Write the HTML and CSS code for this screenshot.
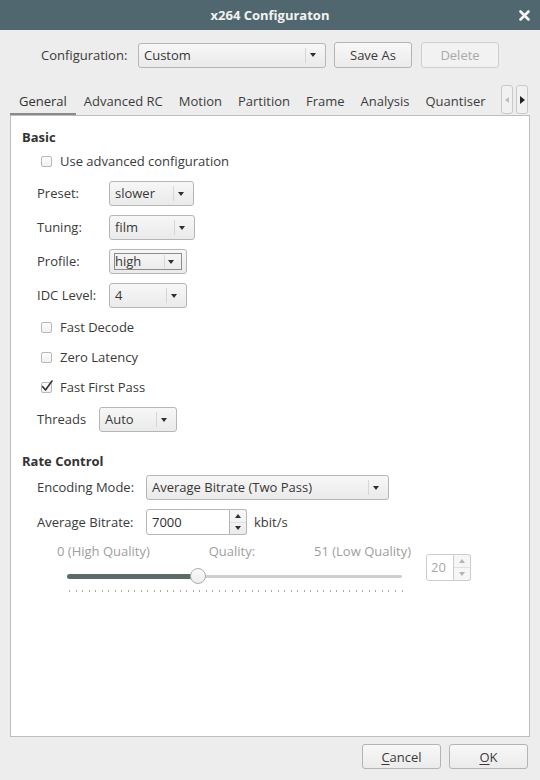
FILE: index.html
```html
<!DOCTYPE html>
<html>
<head>
<meta charset="utf-8">
<link rel="stylesheet" href="styles.css">
</head>
<body>
<div class="window">
  <div class="titlebar">
    <span class="title">x264 Configuraton</span>
    <span class="close"><svg width="11" height="11" viewBox="0 0 11 11"><path d="M1.5 1.5 L9.5 9.5 M9.5 1.5 L1.5 9.5" stroke="#f4f4f4" stroke-width="2.6" stroke-linecap="round"/></svg></span>
  </div>

  <div class="config-row">
    <span class="config-label">Configuration:</span>
    <div class="combo combo-config"><span class="combo-text">Custom</span><span class="combo-btn"><i class="arrow"></i></span></div>
    <span class="btn btn-save">Save As</span>
    <span class="btn btn-delete disabled">Delete</span>
  </div>

  <div class="tabbar">
    <div class="tabs">
      <span class="tab active">General</span>
      <span class="tab">Advanced RC</span>
      <span class="tab">Motion</span>
      <span class="tab">Partition</span>
      <span class="tab">Frame</span>
      <span class="tab">Analysis</span>
      <span class="tab">Quantiser</span>
    </div>
    <div class="tab-scroll">
      <span class="scroll-btn"><i class="tri-left"></i></span>
      <span class="scroll-btn"><i class="tri-right"></i></span>
    </div>
  </div>

  <div class="panel">
    <div class="panel-body">
      <div class="section">
        <div class="section-title basic-title">Basic</div>
        <div class="check-row"><span class="checkbox"></span><span>Use advanced configuration</span></div>
        <div class="form-row">
          <span class="form-label">Preset:</span>
          <div class="combo w-preset"><span class="combo-text">slower</span><span class="combo-btn"><i class="arrow"></i></span></div>
        </div>
        <div class="form-row">
          <span class="form-label">Tuning:</span>
          <div class="combo w-tuning"><span class="combo-text">film</span><span class="combo-btn"><i class="arrow"></i></span></div>
        </div>
        <div class="form-row">
          <span class="form-label">Profile:</span>
          <div class="combo w-profile focused"><span class="focus-ring"><span class="combo-text">high</span><span class="combo-btn"><i class="arrow"></i></span></span></div>
        </div>
        <div class="form-row">
          <span class="form-label">IDC Level:</span>
          <div class="combo w-profile"><span class="combo-text">4</span><span class="combo-btn"><i class="arrow"></i></span></div>
        </div>
        <div class="check-row"><span class="checkbox"></span><span>Fast Decode</span></div>
        <div class="check-row"><span class="checkbox"></span><span>Zero Latency</span></div>
        <div class="check-row"><span class="checkbox checked"><svg width="14" height="14" viewBox="0 0 14 14"><path d="M2.5 7.5 L5.5 11 L12 2" fill="none" stroke="#333" stroke-width="1.6" stroke-linecap="round" stroke-linejoin="round"/></svg></span><span>Fast First Pass</span></div>
        <div class="form-row">
          <span class="form-label threads-label">Threads</span>
          <div class="combo w-threads"><span class="combo-text">Auto</span><span class="combo-btn"><i class="arrow"></i></span></div>
        </div>
      </div>

      <div class="section">
        <div class="section-title rc-title">Rate Control</div>
        <div class="form-row">
          <span class="form-label wide-label">Encoding Mode:</span>
          <div class="combo w-mode"><span class="combo-text">Average Bitrate (Two Pass)</span><span class="combo-btn"><i class="arrow"></i></span></div>
        </div>
        <div class="form-row row-spin">
          <span class="form-label wide-label">Average Bitrate:</span>
          <div class="spin">
            <span class="spin-entry">7000</span>
            <span class="spin-btns"><span class="spin-half"><i class="up"></i></span><span class="spin-half"><i class="down"></i></span></span>
          </div>
          <span class="unit">kbit/s</span>
        </div>
        <div class="quality">
          <div class="quality-main">
            <div class="quality-labels"><span>0 (High Quality)</span><span>Quality:</span><span>51 (Low Quality)</span></div>
            <div class="slider">
              <span class="track"></span>
              <span class="fill" style="width:39.2%"></span>
              <span class="handle" style="left:39.2%"></span>
            </div>
            <div class="ticks"></div>
          </div>
          <div class="spin spin-disabled">
            <span class="spin-entry">20</span>
            <span class="spin-btns"><span class="spin-half"><i class="up"></i></span><span class="spin-half"><i class="down"></i></span></span>
          </div>
        </div>
      </div>
    </div>
  </div>

  <div class="footer">
    <span class="btn btn-footer"><u>C</u>ancel</span>
    <span class="btn btn-footer"><u>O</u>K</span>
  </div>
</div>
</body>
</html>
```
FILE: styles.css
```css
* { box-sizing: border-box; }

body {
  margin: 0;
  width: 540px;
  height: 780px;
  background: #ededed;
  font-family: "Open Sans", "Noto Sans", "DejaVu Sans", sans-serif;
  font-size: 13px;
  color: #3a3a3a;
  overflow: hidden;
}

.window {
  display: flex;
  flex-direction: column;
  height: 780px;
}

/* title bar */
.titlebar {
  height: 30px;
  background: #51676f;
  display: grid;
  grid-template-columns: 1fr auto 1fr;
  align-items: center;
}
.title {
  grid-column: 2;
  font-weight: bold;
  font-size: 13px;
  color: #f1f3f3;
}
.close {
  grid-column: 3;
  justify-self: end;
  margin-right: 10px;
  display: flex;
}

/* configuration row */
.config-row {
  display: flex;
  align-items: center;
  height: 26px;
  margin-top: 12px;
  padding-left: 41px;
}
.config-label { width: 97px; }
.combo-config { width: 188px; height: 26px; }
.btn-save { margin-left: 8px; }
.btn-delete { margin-left: 9px; }

.btn {
  width: 78px;
  height: 26px;
  display: flex;
  align-items: center;
  justify-content: center;
  border: 1px solid #b4b4b4;
  border-radius: 3px;
  background: linear-gradient(#f8f8f8, #ebebeb);
  color: #3a3a3a;
}
.btn u { text-decoration-thickness: 1px; text-underline-offset: 2px; }
.btn.disabled {
  border-color: #cfcfcf;
  background: #f2f2f2;
  color: #a9a9a9;
}

/* combo box */
.combo {
  height: 25px;
  display: flex;
  align-items: center;
  border: 1px solid #b6b6b6;
  border-radius: 3px;
  background: linear-gradient(#f7f7f7, #eaeaea);
  color: #383838;
}
.combo-text {
  flex: 1;
  padding-left: 5px;
  padding-bottom: 1px;
  white-space: nowrap;
  overflow: hidden;
}
.combo-btn {
  width: 20px;
  height: 15px;
  border-left: 1px solid #d6d6d6;
  display: flex;
  align-items: center;
  justify-content: flex-start;
  padding-left: 4px;
}
.arrow {
  width: 0;
  height: 0;
  border-left: 3.5px solid transparent;
  border-right: 3.5px solid transparent;
  border-top: 4px solid #2e2e2e;
}
.w-preset { width: 85px; }
.w-tuning { width: 86px; }
.w-profile { width: 78px; }
.w-threads { width: 78px; }
.w-mode { width: 243px; }

.combo.focused { padding: 3px 4px; }
.focus-ring {
  flex: 1;
  height: 100%;
  display: flex;
  align-items: center;
  border: 1px solid #8c8c8c;
}
.focus-ring .combo-text { padding-left: 0; }
.focus-ring .combo-btn { height: 13px; width: 17px; padding-left: 3px; }

/* tabs */
.tabbar {
  display: flex;
  align-items: flex-end;
  height: 30px;
  margin-top: 17px;
  margin-left: 10px;
  margin-right: 12px;
}
.tabs {
  flex: 1;
  display: flex;
  overflow: hidden;
  height: 30px;
}
.tab {
  height: 30px;
  padding: 3px 8px 0;
  display: flex;
  align-items: center;
  white-space: nowrap;
  color: #3c3c3c;
  border-bottom: 2px solid transparent;
}
.tab:first-child { padding-left: 9px; }
.tab.active {
  border-bottom-color: #8a8a8a;
  color: #333;
  padding-right: 9px;
}
.tab-scroll {
  display: flex;
  gap: 3px;
  height: 30px;
  margin-left: 4px;
  padding-bottom: 1px;
}
.scroll-btn {
  width: 12px;
  height: 29px;
  border: 1px solid #c9c9c9;
  border-radius: 3px;
  background: #f1f1f1;
  display: flex;
  align-items: center;
  justify-content: center;
}
.tri-left {
  width: 0; height: 0;
  border-top: 3.5px solid transparent;
  border-bottom: 3.5px solid transparent;
  border-right: 4px solid #bdbdbd;
}
.tri-right {
  width: 0; height: 0;
  border-top: 4px solid transparent;
  border-bottom: 4px solid transparent;
  border-left: 5px solid #222;
}

/* panel */
.panel {
  margin: 0 10px;
  height: 622px;
  border: 1px solid #bdbdbd;
  background: #ffffff;
}
.panel-body {
  display: flex;
  flex-direction: column;
  gap: 20px;
  padding: 12px 10px 0 11px;
}
.section {
  display: flex;
  flex-direction: column;
  gap: 9px;
}
.section-title {
  font-weight: bold;
  height: 18px;
  line-height: 18px;
  color: #333;
}
.basic-title { margin-bottom: -4px; }
.rc-title { margin-bottom: -4px; }

.check-row {
  display: flex;
  align-items: center;
  height: 21px;
  padding-left: 19px;
  padding-bottom: 1px;
}
.checkbox {
  position: relative;
  width: 11px;
  height: 11px;
  margin-right: 8px;
  border: 1px solid #b8b8b8;
  border-radius: 2px;
  background: linear-gradient(#fdfdfd, #f1f1f1);
}
.checkbox svg {
  position: absolute;
  left: -2px;
  top: -4px;
}

.form-row {
  display: flex;
  align-items: center;
  height: 25px;
  padding-left: 15px;
}
.row-spin { height: 26px; }
.form-label { width: 72px; white-space: nowrap; padding-bottom: 1px; }
.threads-label { width: 62px; }
.wide-label { width: 109px; }

/* spin */
.spin {
  display: flex;
  height: 26px;
}
.spin-entry {
  width: 84px;
  display: flex;
  align-items: center;
  padding-left: 5px;
  padding-bottom: 1px;
  border: 1px solid #b6b6b6;
  border-radius: 3px 0 0 3px;
  background: #ffffff;
  color: #2e2e2e;
}
.spin-btns {
  width: 17px;
  display: flex;
  flex-direction: column;
  border: 1px solid #b6b6b6;
  border-left: none;
  border-radius: 0 3px 3px 0;
  background: linear-gradient(#f8f8f8, #ececec);
}
.spin-half {
  flex: 1;
  display: flex;
  align-items: center;
  justify-content: center;
}
.spin-half:first-child { border-bottom: 1px solid #e0e0e0; }
.up {
  width: 0; height: 0;
  border-left: 3.5px solid transparent;
  border-right: 3.5px solid transparent;
  border-bottom: 4px solid #2e2e2e;
}
.down {
  width: 0; height: 0;
  border-left: 3.5px solid transparent;
  border-right: 3.5px solid transparent;
  border-top: 4px solid #2e2e2e;
}
.unit { margin-left: 7px; padding-bottom: 1px; }

.spin-disabled { height: 27px; margin-top: 11px; margin-left: 15px; }
.spin-disabled .spin-entry {
  width: 28px;
  border-color: #cdcdcd;
  color: #a8a8a8;
  padding-left: 4px;
}
.spin-disabled .spin-btns {
  border-color: #cdcdcd;
  background: #f6f6f6;
}
.spin-disabled .up { border-bottom-color: #b5b5b5; }
.spin-disabled .down { border-top-color: #b5b5b5; }

/* quality */
.quality {
  display: flex;
  align-items: flex-start;
  margin-left: 35px;
  margin-top: -1px;
}
.quality-main {
  width: 354px;
  display: flex;
  flex-direction: column;
}
.quality-labels {
  display: flex;
  justify-content: space-between;
  height: 18px;
  line-height: 17px;
  color: #9e9e9e;
}
.slider {
  position: relative;
  margin-left: 10px;
  width: 335px;
  height: 16px;
  margin-top: 7px;
}
.track {
  position: absolute;
  left: 0;
  right: 0;
  top: 7px;
  height: 3px;
  border-radius: 2px;
  background: #cfcfcf;
}
.fill {
  position: absolute;
  left: 0;
  top: 6px;
  height: 5px;
  border-radius: 3px;
  background: #5b6c6a;
}
.handle {
  position: absolute;
  top: 0;
  width: 16px;
  height: 16px;
  margin-left: -8px;
  border-radius: 50%;
  border: 1px solid #aeaeae;
  background: linear-gradient(#fbfbfb, #ececec);
}
.ticks {
  margin-left: 12px;
  width: 334px;
  height: 2px;
  margin-top: 6px;
  background: repeating-linear-gradient(to right, #a9a9a9 0 1px, transparent 1px 6.52px);
}

/* footer */
.footer {
  display: flex;
  justify-content: flex-end;
  gap: 8px;
  margin-top: 7px;
  padding-right: 12px;
}
.btn-footer { width: 79px; height: 25px; }
```
